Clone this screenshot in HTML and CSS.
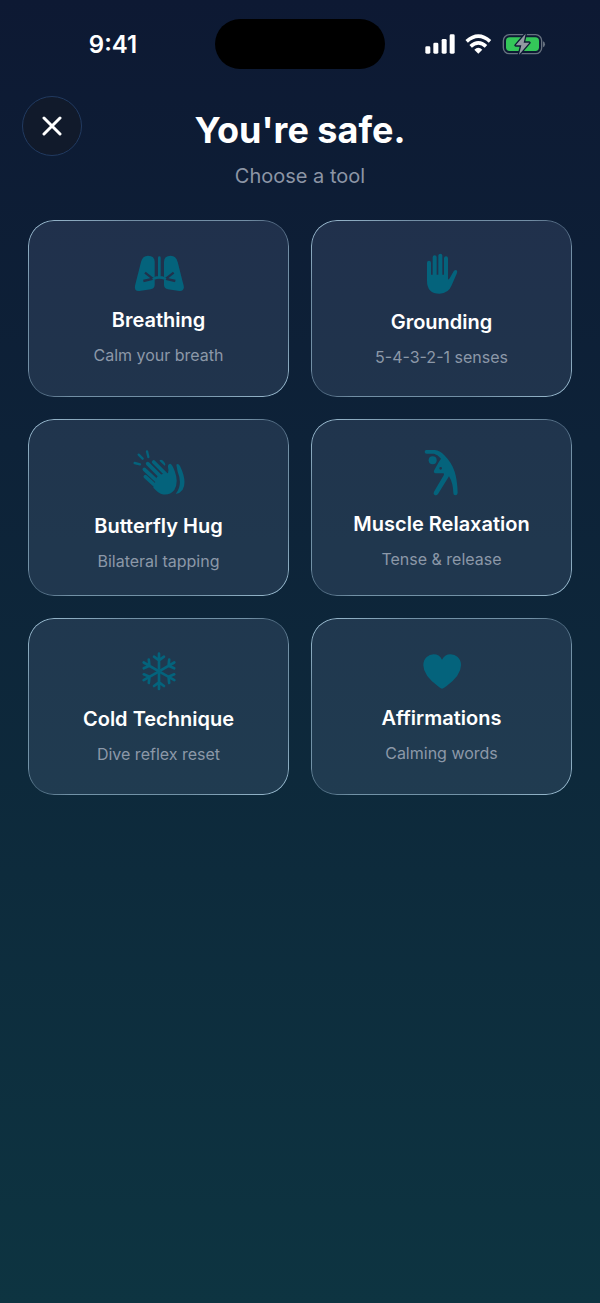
FILE: index.html
```html
<!DOCTYPE html>
<html lang="en">
<head>
<meta charset="utf-8">
<meta name="viewport" content="width=device-width, initial-scale=1">
<title>You're safe.</title>
<link rel="stylesheet" href="styles.css">
</head>
<body>

<div class="status">
  <div class="time">9:41</div>
  <div class="island"></div>
  <div class="signals">
    <svg width="30" height="20" viewBox="76 41 90 60" fill="#fff">
      <rect x="77" y="78" width="15" height="22" rx="4"/>
      <rect x="101" y="67" width="15" height="33" rx="4"/>
      <rect x="126" y="56" width="15" height="44" rx="4"/>
      <rect x="150" y="42" width="15" height="58" rx="4"/>
    </svg>
    <svg width="27" height="20" viewBox="196 41 81 60" fill="none" stroke="#fff" stroke-width="11">
      <path d="M201 63Q236 32 271 63"/>
      <path d="M213 78Q236 57 259 78"/>
      <path d="M224 88Q236 77 248 88L236 100Z" fill="#fff" stroke="none"/>
    </svg>
    <svg width="44" height="22" viewBox="304 38 132 66">
      <rect x="308" y="43" width="115" height="57" rx="18" fill="none" stroke="#66717f" stroke-width="4"/>
      <path d="M427 63q6 2 6 9t-6 9z" fill="#66717f"/>
      <rect x="316" y="51" width="99" height="41" rx="11" fill="#34c759"/>
      <path d="M375 40L345 75H362L355 103L386 67H369Z" fill="#9299a2" stroke="#0d1b35" stroke-width="8" stroke-linejoin="round" paint-order="stroke"/>
    </svg>
  </div>
</div>

<header class="top">
  <button class="close" aria-label="Close">
    <svg width="20" height="20" viewBox="0 0 20 20" fill="none" stroke="#fff" stroke-width="3" stroke-linecap="round"><path d="M2 2L18 18M18 2L2 18"/></svg>
  </button>
  <div class="heading">
    <h1>You're safe.</h1>
    <p>Choose a tool</p>
  </div>
</header>

<main class="tools">
  <button class="card">
    <svg width="50" height="37" viewBox="39 45 150 111">
      <mask id="bronchi">
        <rect x="39" y="45" width="150" height="111" fill="#fff"/>
        <path d="M67 123L101 115M72 98L94 115M163 123L129 115M158 98L136 115" fill="none" stroke="#000" stroke-width="7"/>
      </mask>
      <g mask="url(#bronchi)">
        <path d="M81 47Q101 47 101 65V135Q100 146 89 148L55 153Q39 154 42 137L60 66Q65 47 81 47Z"/>
        <path d="M149 47Q129 47 129 65V135Q130 146 141 148L175 153Q191 154 188 137L170 66Q165 47 149 47Z"/>
      </g>
      <path d="M115 53V110M98 116Q115 108 132 116" fill="none" stroke="#04637c" stroke-width="8" stroke-linecap="round"/>
    </svg>
    <strong>Breathing</strong>
    <span>Calm your breath</span>
  </button>
  <button class="card">
    <svg width="32" height="41" viewBox="51 39 96 123">
      <path d="M60 68V115M77 52V110M94 47V110M111 55V115" fill="none" stroke="#04637c" stroke-width="12" stroke-linecap="round"/>
      <path d="M54 104H117V118Q120 119 122 115L134 94Q140 87 144 92Q146 95 143 101L128 136Q118 161 92 161Q54 161 54 122Z"/>
    </svg>
    <strong>Grounding</strong>
    <span>5-4-3-2-1 senses</span>
  </button>
  <button class="card">
    <svg width="52" height="51" viewBox="36 15 156 153" stroke-linecap="round" stroke-linejoin="round">
      <path d="M78 28L82 45M53 38L65 50M41 63L57 67" fill="none" stroke="#04637c" stroke-width="7"/>
      <path d="M98 60L134 96M80 65L122 107M70 82L112 121M73 104L106 134" fill="none" stroke="#04637c" stroke-width="11"/>
      <path d="M108 104L132 92L141 94Q144 86 141 76Q140 65 148 65Q154 67 161 87Q174 120 160 144Q145 162 121 156Q112 153 97 137Z"/>
      <path d="M166 68Q171 62 177 72Q199 118 185 143Q178 153 164 156Q186 128 170 89ZM115 56Q122 49 131 62Q135 69 131 71Z"/>
    </svg>
    <strong>Butterfly Hug</strong>
    <span>Bilateral tapping</span>
  </button>
  <button class="card">
    <svg width="35" height="47" viewBox="43 26 105 141">
      <circle cx="69" cy="60" r="12"/>
      <path fill-rule="evenodd" d="M50 29H76Q90 30 104 45Q126 67 135 94Q143 119 144 158Q143 165 137 165Q131 165 131 158Q130 127 118 108L85 161Q80 167 74 163Q70 160 73 154L103 103L102 99H77Q70 97 74 89L87 66L94 55Q85 43 73 40H51Q45 40 45 35Q45 29 50 29ZM93 80A4 4 0 1 0 93 88A4 4 0 1 0 93 80Z"/>
    </svg>
    <strong>Muscle Relaxation</strong>
    <span>Tense &amp; release</span>
  </button>
  <button class="card">
    <svg width="34" height="39" viewBox="63 35 102 117" fill="none" stroke="#04637c" stroke-width="8" stroke-linecap="round" stroke-linejoin="round">
      <defs><path id="arm" d="M114 93V40M99 49L114 60L129 49"/></defs>
      <use href="#arm"/>
      <use href="#arm" transform="rotate(60 114 93)"/>
      <use href="#arm" transform="rotate(120 114 93)"/>
      <use href="#arm" transform="rotate(180 114 93)"/>
      <use href="#arm" transform="rotate(240 114 93)"/>
      <use href="#arm" transform="rotate(300 114 93)"/>
    </svg>
    <strong>Cold Technique</strong>
    <span>Dive reflex reset</span>
  </button>
  <button class="card">
    <svg width="38" height="37" viewBox="37 39 114 111">
      <path d="M94 146Q90 146 82 139Q38 106 38 76Q38 60 48 51Q57 43 69 43Q86 43 94 59Q103 43 120 43Q132 43 141 51Q151 60 151 76Q151 106 107 139Q98 146 94 146Z"/>
    </svg>
    <strong>Affirmations</strong>
    <span>Calming words</span>
  </button>
</main>

</body>
</html>
```

FILE: styles.css
```css
* { box-sizing: border-box; margin: 0; padding: 0; }

body {
  min-height: 100vh;
  background: linear-gradient(#0d1933, #0d2238 34%, #0d2b3c 67%, #0d3441);
  font-family: Inter, "Liberation Sans", sans-serif;
  color: #fff;
}
button { font: inherit; color: inherit; border: 0; cursor: pointer; }
svg { display: block; }

.status {
  display: grid;
  grid-template-columns: 1fr 170px 1fr;
  align-items: center;
  padding-top: 19px;
}
.time {
  padding-left: 11px;
  text-align: center;
  font-size: 24px;
  font-weight: 600;
}
.island { height: 50px; border-radius: 25px; background: #000; }
.signals {
  display: flex;
  align-items: center;
  justify-content: center;
  gap: 10px;
  padding-right: 14px;
}

.top {
  display: grid;
  grid-template-columns: 60px 1fr 60px;
  padding: 27px 22px 32px;
}
.close {
  display: flex;
  align-items: center;
  justify-content: center;
  width: 60px;
  height: 60px;
  border: 1px solid #213a60;
  border-radius: 50%;
  background: #111a2b;
}
.heading { padding-top: 11px; text-align: center; }
h1 { font-size: 36px; line-height: 46px; font-weight: 700; }
.heading p {
  margin-top: 11px;
  font-size: 20px;
  line-height: 24px;
  color: #8c95a5;
}

.tools {
  display: grid;
  grid-template-columns: 1fr 1fr;
  gap: 22px;
  padding: 0 28px 28px;
}
.card {
  position: relative;
  display: flex;
  flex-direction: column;
  align-items: center;
  justify-content: center;
  gap: 15px;
  min-height: 177px;
  padding-bottom: 1px;
  border-radius: 26px;
  background: rgba(190, 210, 255, .11);
}
/* gradient hairline, bright in two opposite corners */
.card::before {
  content: "";
  position: absolute;
  inset: 0;
  padding: 1px;
  border-radius: 26px;
  background: linear-gradient(to bottom right,
    rgba(170, 205, 225, .9), rgba(170, 205, 225, .6) 20%, rgba(170, 205, 225, .6) 42%,
    rgba(170, 205, 225, .25) 50%,
    rgba(170, 205, 225, .6) 58%, rgba(170, 205, 225, .6) 80%, rgba(170, 205, 225, .9));
  mask: linear-gradient(#000 0 0) content-box exclude, linear-gradient(#000 0 0);
}
.card svg { fill: #04637c; }
.card svg[fill="none"] { fill: none; }
.card strong { font-size: 20px; line-height: 26px; font-weight: 600; }
.card span { font-size: 16px; line-height: 14px; color: #8c98a8; }
```
